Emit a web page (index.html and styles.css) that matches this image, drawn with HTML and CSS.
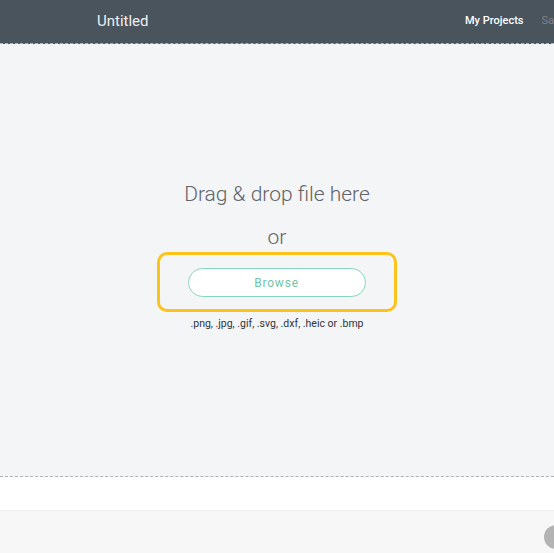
FILE: index.html
```html
<!DOCTYPE html>
<html>
<head>
<meta charset="utf-8">
<link rel="stylesheet" href="styles.css">
</head>
<body>
<header class="topbar">
  <div class="title">Untitled</div>
  <nav class="nav">
    <span class="nav-link">My Projects</span>
    <span class="nav-link muted">Save</span>
  </nav>
</header>
<main class="dropzone">
  <div class="drop-title">Drag &amp; drop file here</div>
  <div class="drop-or">or</div>
  <div class="highlight">
    <button class="browse">Browse</button>
  </div>
  <div class="formats">.png, .jpg, .gif, .svg, .dxf, .heic or .bmp</div>
</main>
<section class="band"></section>
<footer class="footer">
  <span class="fab"></span>
</footer>
</body>
</html>
```
FILE: styles.css
```css
html, body {
  margin: 0;
  padding: 0;
  height: 100%;
  overflow: hidden;
  font-family: Roboto, "Liberation Sans", sans-serif;
}
body {
  background: #f7f7f7;
}
.topbar {
  height: 43px;
  background: #4a545c;
  border-bottom: 1px dashed #b5b9bd;
  display: flex;
  align-items: center;
  padding-left: 97px;
  box-sizing: content-box;
  overflow: hidden;
}
.title {
  color: #eef0f2;
  font-size: 15px;
  font-weight: 400;
  margin-top: -1px;
}
.nav {
  display: flex;
  gap: 18px;
  margin-left: auto;
  margin-right: -11px;
  margin-top: -3px;
  flex-shrink: 0;
}
.nav-link {
  color: #ffffff;
  font-size: 11px;
  font-weight: 500;
  white-space: nowrap;
}
.nav-link.muted {
  color: #7b8389;
  font-weight: 400;
}
.dropzone {
  height: 433px;
  box-sizing: border-box;
  background: #f4f5f7;
  border-bottom: 1px dashed #aeb0b3;
  display: flex;
  flex-direction: column;
  align-items: center;
  padding-top: 136px;
}
.drop-title {
  font-size: 21px;
  line-height: 28px;
  color: #606367;
  font-weight: 300;
}
.drop-or {
  font-size: 21px;
  line-height: 28px;
  color: #606367;
  font-weight: 300;
  margin-top: 15px;
}
.highlight {
  margin-top: 1px;
  width: 240px;
  height: 60px;
  box-sizing: border-box;
  border: 3px solid #fbc31c;
  border-radius: 10px;
  display: flex;
  justify-content: center;
  padding-top: 13px;
}
.browse {
  width: 178px;
  height: 29px;
  background: #ffffff;
  border: 1.5px solid #86d6bd;
  border-radius: 15px;
  color: #70c6a6;
  font-family: Roboto, "Liberation Sans", sans-serif;
  font-size: 12px;
  letter-spacing: 0.8px;
  padding: 0;
  margin-left: -1px;
}
.formats {
  margin-top: 5px;
  font-size: 10.5px;
  line-height: 14px;
  color: #2e343a;
}
.band {
  height: 33px;
  background: #ffffff;
  border-bottom: 1px solid #eeeeee;
}
.footer {
  position: relative;
  height: 60px;
  background: #f7f7f7;
}
.fab {
  position: absolute;
  left: 544px;
  top: 14px;
  width: 24px;
  height: 24px;
  border-radius: 50%;
  background: #b3b3b3;
}
```
